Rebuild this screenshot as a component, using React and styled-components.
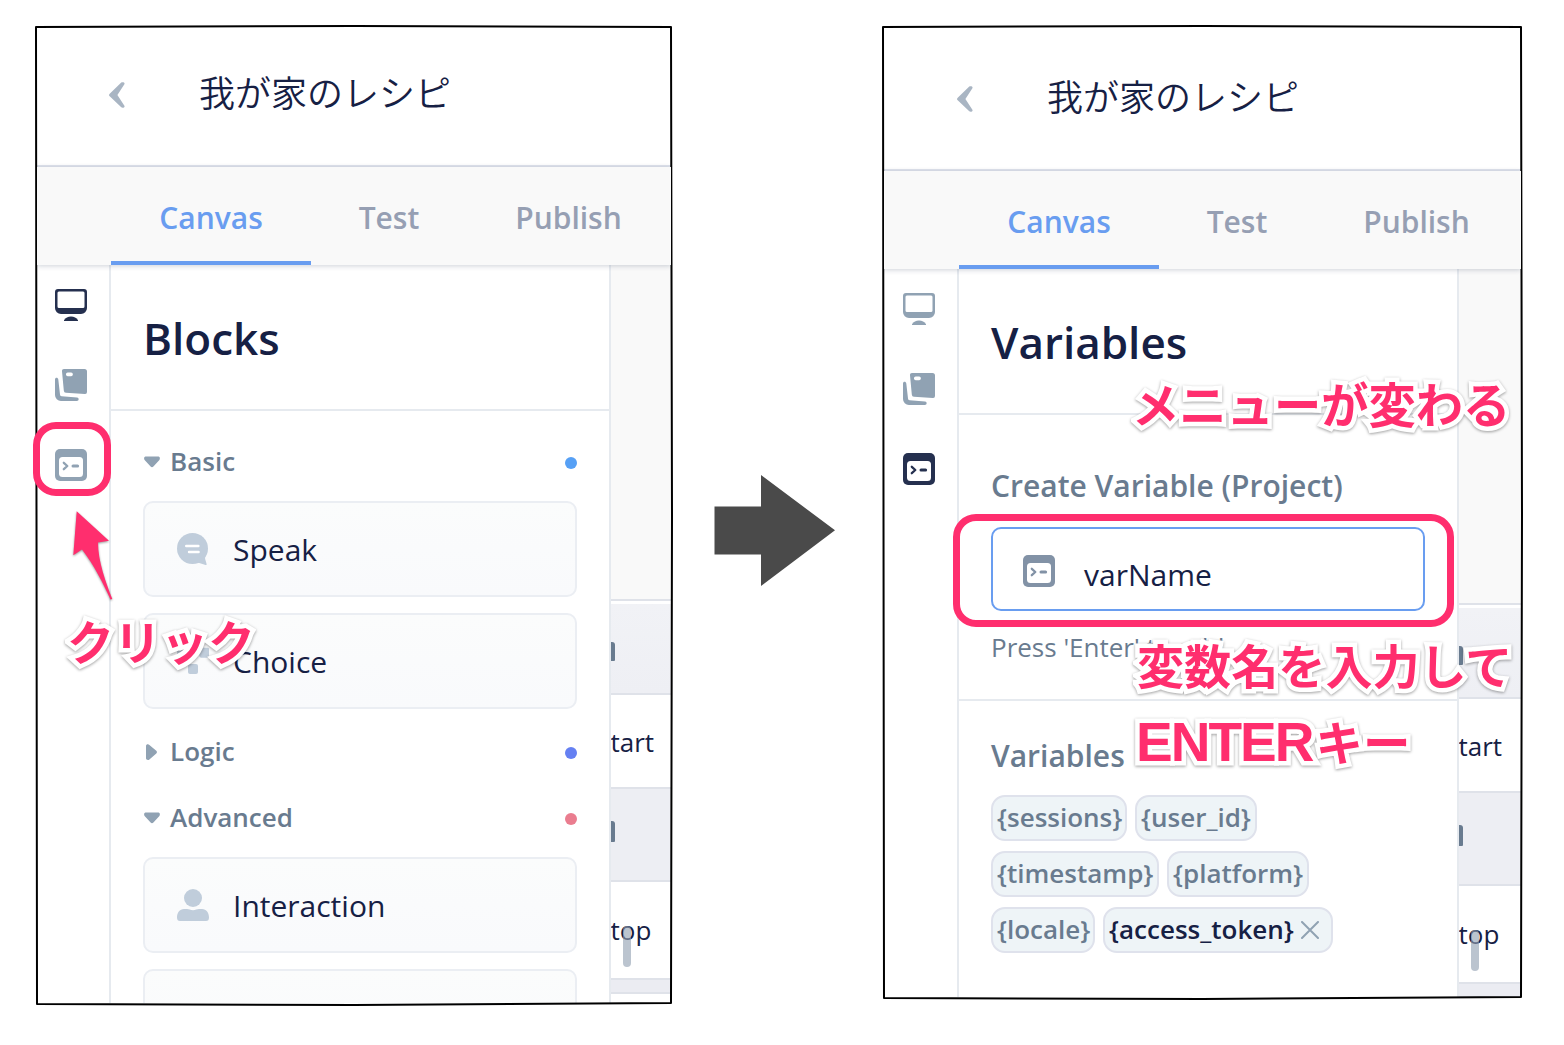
import React from "react";
import styled, { createGlobalStyle } from "styled-components";

const Global = createGlobalStyle`
  *, *::before, *::after { box-sizing: border-box; }
  body { margin: 0; background: #fff; overflow: hidden; }
`;

const NAVY = "#162044";
const SLATE = "#697b8f";
const MUTED = "#90a2b3";
const PALE = "#c0cddb";
const LINE = "#e6eaef";
const PINK = "#ff2e6e";

const Page = styled.main`
  position: relative;
  width: 1564px;
  height: 1045px;
  padding: 28px 43px 0 37px;
  display: flex;
  justify-content: space-between;
  align-items: flex-start;
  font-family: "Open Sans", "Noto Sans CJK JP", sans-serif;
  color: ${NAVY};
`;

const Screen = styled.section`
  width: ${(p) => p.$width}px;
  height: ${(p) => p.$height}px;
  display: flex;
  flex-direction: column;
  overflow: hidden;
  background: #fff;
`;

const Header = styled.header`
  flex: none;
  height: ${(p) => 139 + p.$shift}px;
  padding: ${(p) => p.$shift}px 0 4px ${(p) => 72 + p.$inset}px;
  display: flex;
  align-items: center;
  border-bottom: 2px solid #dfe3ec;
`;

const Title = styled.h1`
  margin: 0 0 7px 74px;
  font: 350 36px/54px "Noto Sans CJK JP", sans-serif;
  white-space: nowrap;
`;

const Tabs = styled.nav`
  flex: none;
  position: relative;
  z-index: 1;
  height: 98px;
  padding-left: ${(p) => 74 + p.$inset}px;
  display: flex;
  background: #f9f9f9;
  box-shadow: 0 1px 5px rgba(30, 50, 80, 0.22);
`;

const Tab = styled.a`
  flex: none;
  width: ${(p) => p.$width}px;
  display: flex;
  justify-content: center;
  padding-top: 31px;
  font-size: 30px;
  line-height: 40px;
  font-weight: 600;
  color: ${(p) => (p.$active ? "#699df0" : "#969fb3")};
  border-bottom: 4px solid ${(p) => (p.$active ? "#699df0" : "transparent")};
`;

const Body = styled.div`
  flex: 1;
  min-height: 0;
  display: flex;
`;

const Rail = styled.aside`
  flex: none;
  width: ${(p) => 74 + p.$inset}px;
  padding: 24px 0 0 ${(p) => 18 + p.$inset}px;
  display: flex;
  flex-direction: column;
  gap: 48px;
  border-right: 2px solid ${LINE};
`;

const Drawer = styled.div`
  flex: none;
  width: 500px;
  overflow: hidden;
  border-right: 2px solid ${LINE};
`;

const DrawerTitle = styled.h2`
  margin: 0;
  height: 146px;
  padding: 43px 0 0 32px;
  font-size: 44px;
  line-height: 60px;
  font-weight: 600;
  border-bottom: 2px solid ${LINE};
`;

const Blocks = styled.div`
  padding: 18px 32px 0;
`;

const GroupHead = styled.div`
  height: 66px;
  padding-bottom: 2px;
  display: flex;
  align-items: center;
  font-size: 26px;
  font-weight: 600;
  color: ${SLATE};
  svg { margin: 2px 9px 0 0; }
`;

const Dot = styled.span`
  width: 12px;
  height: 12px;
  margin: 4px 0 0 auto;
  border-radius: 50%;
  background: ${(p) => p.$color};
`;

const Cards = styled.div`
  padding: 6px 0 10px;
  display: flex;
  flex-direction: column;
  gap: 16px;
`;

const Card = styled.div`
  height: 96px;
  padding-left: 32px;
  display: flex;
  align-items: center;
  font-size: 30px;
  border: 2px solid #ebeef3;
  border-radius: 10px;
  background: linear-gradient(#fbfcfc, #f9fafc);
  svg { margin-right: 24px; }
`;

const CreateForm = styled.div`
  height: 286px;
  padding: 51px 32px 0;
  border-bottom: 2px solid ${LINE};
`;

const Label = styled.h3`
  margin: 0;
  font-size: 30px;
  line-height: 40px;
  font-weight: 600;
  color: ${SLATE};
  white-space: nowrap;
`;

const Field = styled.div`
  height: 84px;
  margin-top: 21px;
  padding: 26px 0 0 30px;
  display: flex;
  align-items: flex-start;
  gap: 29px;
  font-size: 30px;
  line-height: 40px;
  border: 2px solid #699df0;
  border-radius: 10px;
  background: #fff;
`;

const Hint = styled.p`
  margin: 18px 0 0;
  font-size: 26px;
  line-height: 36px;
  color: ${SLATE};
`;

const VariableList = styled.div`
  padding: 35px 32px 0;
`;

const Tags = styled.div`
  margin-top: 19px;
  display: flex;
  flex-wrap: wrap;
  gap: 10px 8px;
  padding-right: 90px;
`;

const Tag = styled.span`
  height: 46px;
  width: ${(p) => p.$width}px;
  padding: 0 0 2px 4px;
  display: flex;
  align-items: center;
  gap: 7px;
  font-size: 26px;
  line-height: 40px;
  font-weight: 600;
  white-space: nowrap;
  color: ${(p) => (p.$dark ? NAVY : SLATE)};
  border: 2px solid #dfe2ec;
  border-radius: 14px;
  background: #eef4f7;
  svg { margin-top: 2px; }
`;

const Canvas = styled.div`
  flex: 1;
  min-width: 0;
  overflow: hidden;
  background: #f9f9f9;
  padding-top: 334px;
`;

const Strip = styled.div`
  position: relative;
  height: ${(p) => p.$height}px;
  padding-top: ${(p) => p.$pad || 0}px;
  display: flex;
  align-items: center;
  background: ${(p) => p.$fill || "#fff"};
  border-top: ${(p) => p.$top ?? 2}px solid #dfe2e9;
  font-size: 26px;
  line-height: 36px;
  text-indent: -0.5px;
`;

const Gap = styled.div`
  height: 5px;
  border-top: 2px solid #dfe2e9;
  background: #fff;
`;

const IconEdge = styled.i`
  width: 4px;
  height: ${(p) => p.$height}px;
  margin: ${(p) => p.$margin};
  border-radius: 0 3px 1px 0;
  background: ${SLATE};
`;

const Grip = styled.i`
  position: absolute;
  left: 12px;
  top: 44px;
  width: 8px;
  height: 41px;
  border-radius: 4px;
  background: rgba(145, 160, 178, 0.62);
`;

const Overlay = styled.svg`
  position: absolute;
  left: 0;
  top: 0;
`;

const Pointer = styled.path`
  fill: ${PINK};
  filter: drop-shadow(0 1.5px 1px rgba(0, 0, 0, 0.4));
`;

const Ring = styled.div`
  position: absolute;
  left: ${(p) => p.$x}px;
  top: ${(p) => p.$y}px;
  width: ${(p) => p.$w}px;
  height: ${(p) => p.$h}px;
  border: 7px solid ${PINK};
  border-radius: 23px;
`;

const Note = styled.div`
  position: absolute;
  left: ${(p) => p.$x}px;
  top: ${(p) => p.$y}px;
  font: 700 ${(p) => p.$size || 47.5}px/60px "Noto Sans CJK JP", sans-serif;
  white-space: nowrap;
  color: ${PINK};
  -webkit-text-stroke: 9px #fff;
  paint-order: stroke fill;
  stroke-linejoin: round;
  filter: drop-shadow(0 1.5px 1.5px rgba(0, 0, 0, 0.38));
`;

const Latin = styled.span`
  font-family: "Liberation Sans", sans-serif;
  font-weight: 700;
  font-size: 55px;
  letter-spacing: -2px;
  margin-right: 3px;
`;

const MonitorIcon = ({ color }) => (
  <svg width="32" height="32" viewBox="0 0 32 32" fill={color}>
    <path fillRule="evenodd" d="M3 0h26a3 3 0 0 1 3 3v16a6 6 0 0 1-6 6H6a6 6 0 0 1-6-6V3a3 3 0 0 1 3-3zM4 2.400A1.500 1.500 0 0 0 2.500 4v13.500A1.500 1.500 0 0 0 4 19h24a1.500 1.500 0 0 0 1.500-1.500V4A1.500 1.500 0 0 0 28 2.400z" />
    <path d="M9 31.200C10.500 29 13 27.600 16 27.600s5.500 1.400 7 3.600V32H9z" />
  </svg>
);

const LayersIcon = ({ color }) => (
  <svg width="32" height="32" viewBox="0 0 32 32" fill={color}>
    <path d="M9 0h20.500A2.500 2.500 0 0 1 32 2.500V23a2 2 0 0 1-2.200 2L11 23.800A2.400 2.400 0 0 1 8.800 21.500L7 2.300A2 2 0 0 1 9 0z" />
    <rect x="11" y="3.400" width="6.800" height="3.800" rx="1.700" fill="#fff" />
    <path d="M0 10.500C0 8 3 8 3.300 10.500L5 25.500c.1 1 .7 1.600 1.600 1.700L22 28.600c2.300.2 2.200 3.400-.2 3.400H6a6 6 0 0 1-6-6z" />
  </svg>
);

const TerminalIcon = ({ color }) => (
  <svg width="32" height="32" viewBox="0 0 32 32">
    <rect width="32" height="32" rx="5" fill={color} />
    <rect x="4" y="8" width="24" height="20" rx="3.500" fill="#fff" />
    <path d="M8.800 13.800L12.300 17l-3.500 3.200" fill="none" stroke={color} strokeWidth="2.300" strokeLinecap="round" strokeLinejoin="round" />
    <path d="M18 17h4.600" stroke={color} strokeWidth="3" strokeLinecap="round" />
  </svg>
);

const SpeakIcon = () => (
  <svg width="32" height="32" viewBox="0 0 32 32">
    <circle cx="15.500" cy="15.500" r="15.500" fill={PALE} />
    <path d="M29.500 21.500c-1.600 2.300-1.700 3-1.200 5l1.300 4.500c.2.800-.3 1.200-1 1L19 29z" fill={PALE} />
    <path d="M9.200 13h12.200M12 19h9.600" stroke="#fff" strokeWidth="2.400" strokeLinecap="round" />
  </svg>
);

const ChoiceIcon = () => (
  <svg width="32" height="32" viewBox="0 0 32 32" fill={PALE}>
    <rect x="0" y="2.700" width="10" height="10" rx="2" />
    <rect x="22.300" y="2.700" width="10" height="10" rx="2" />
    <rect x="11" y="19" width="10" height="10" rx="2" />
  </svg>
);

const PersonIcon = () => (
  <svg width="32" height="32" viewBox="0 0 32 32" fill={PALE}>
    <circle cx="16" cy="9" r="9" />
    <path d="M7 20h3c2 0 3.500 1.200 6 1.200S20 20 22 20h3c4.500 0 7 4 7 8.500 0 2.500-1 3.500-3 3.500H3c-2 0-3-1-3-3.500C0 24 2.500 20 7 20z" />
  </svg>
);

const Caret = ({ open }) => (
  <svg width="18" height="18" viewBox="0 0 18 18" fill={MUTED}>
    {open ? (
      <path d="M2.400 3.600h13.200c1.400 0 1.700 2.400.8 3.400l-6 6.500c-.8.900-2 .9-2.800 0L1.600 7c-.9-1-.6-3.400.8-3.400z" />
    ) : (
      <path d="M3 3c0-1.800 2.200-2.200 3.400-1.100l6.900 5.800c.9.800.9 1.900 0 2.700l-6.900 6C5.200 17.400 3 16.900 3 15.200z" />
    )}
  </svg>
);

const BackIcon = () => (
  <svg width="16" height="26" viewBox="0 0 16 26">
    <path d="M12 .8c1.400-1.100 4.300-.2 3.400 1.400L8.400 13l7 10.800c.9 1.600-2 2.500-3.400 1.300L.7 14.300a1.800 1.800 0 0 1 0-2.600z" fill="#a9b5c3" />
  </svg>
);

const CloseIcon = () => (
  <svg width="18" height="18" viewBox="0 0 18 18">
    <path d="M1 1l16 16M17 1L1 17" stroke={MUTED} strokeWidth="2" strokeLinecap="round" />
  </svg>
);

function ProjectScreen({ width, height, shift = 0, inset = 0, active, children }) {
  const tint = (name) => (name === active ? "#25304f" : MUTED);
  return (
    <Screen $width={width} $height={height}>
      <Header $shift={shift} $inset={inset}>
        <BackIcon />
        <Title>我が家のレシピ</Title>
      </Header>
      <Tabs $inset={inset}>
        <Tab $width={200} $active>Canvas</Tab>
        <Tab $width={156}>Test</Tab>
        <Tab $width={203}>Publish</Tab>
      </Tabs>
      <Body>
        <Rail $inset={inset}>
          <MonitorIcon color={tint("blocks")} />
          <LayersIcon color={tint("flows")} />
          <TerminalIcon color={tint("variables")} />
        </Rail>
        <Drawer>{children}</Drawer>
        <Canvas>
          <Gap />
          <Strip $height={89} $top={0} $fill="linear-gradient(#f1f2f6, #eeeff4)">
            <IconEdge $height={19} $margin="6px 0 0" />
          </Strip>
          <Strip $height={94} $pad={2}>tart</Strip>
          <Strip $height={93} $fill="#edeef3">
            <IconEdge $height={21} $margin="0 0 6px" />
          </Strip>
          <Strip $height={98}>
            top
            <Grip />
          </Strip>
          <Strip $height={14} $fill="#ebecf2" />
          <Strip $height={60} />
        </Canvas>
      </Body>
    </Screen>
  );
}

export default function App() {
  return (
    <Page>
      <Global />
      <ProjectScreen width={634} height={975} active="blocks">
        <DrawerTitle>Blocks</DrawerTitle>
        <Blocks>
          <GroupHead><Caret open />Basic<Dot $color="#56a0f5" /></GroupHead>
          <Cards>
            <Card><SpeakIcon />Speak</Card>
            <Card><ChoiceIcon />Choice</Card>
          </Cards>
          <GroupHead><Caret />Logic<Dot $color="#6580f2" /></GroupHead>
          <GroupHead><Caret open />Advanced<Dot $color="#ea7d8f" /></GroupHead>
          <Cards>
            <Card><PersonIcon />Interaction</Card>
            <Card />
          </Cards>
        </Blocks>
      </ProjectScreen>
      <ProjectScreen width={637} height={969} shift={4} inset={1} active="variables">
        <DrawerTitle>Variables</DrawerTitle>
        <CreateForm>
          <Label>Create Variable (Project)</Label>
          <Field><TerminalIcon color="#8292a6" />varName</Field>
          <Hint>Press 'Enter' to add</Hint>
        </CreateForm>
        <VariableList>
          <Label>Variables</Label>
          <Tags>
            <Tag $width={136}>{"{sessions}"}</Tag>
            <Tag $width={122}>{"{user_id}"}</Tag>
            <Tag $width={168}>{"{timestamp}"}</Tag>
            <Tag $width={142}>{"{platform}"}</Tag>
            <Tag $width={104}>{"{locale}"}</Tag>
            <Tag $width={230} $dark>{"{access_token}"}<CloseIcon /></Tag>
          </Tags>
        </VariableList>
      </ProjectScreen>

      <Overlay width="1564" height="1045" viewBox="0 0 1564 1045">
        <g fill="none" stroke="#000" strokeWidth="2" strokeLinejoin="round">
          <path d="M36 27L354 26L671 27L672 515L671 1003L354 1005L37 1004L36.500 515z" />
          <path d="M883 27L1202 26L1521 27L1522 512L1521 997L1202 999L884 998L883.500 512z" />
        </g>
        <path d="M714.500 506.500H761V475l74 55.300L761 586v-31.500h-46.500z" fill="#4a4a4a" />
        <Pointer d="M76.700 511.300L109 540.700L98 542.500C98 561 106 583 112.300 599L110.500 599.500C103 583 94 565 82 549.500L73.300 555.300z" />
      </Overlay>
      <Ring $x={33} $y={422} $w={78} $h={74} />
      <Ring $x={953} $y={513.5} $w={501} $h={113} />
      <Note $x={67} $y={610} $size={47}>クリック</Note>
      <Note $x={1132} $y={373} $size={47.3}>メニューが変わる</Note>
      <Note $x={1137} $y={634} $size={47.1}>変数名を入力して</Note>
      <Note $x={1136} $y={711}><Latin>ENTER</Latin>キー</Note>
    </Page>
  );
}
